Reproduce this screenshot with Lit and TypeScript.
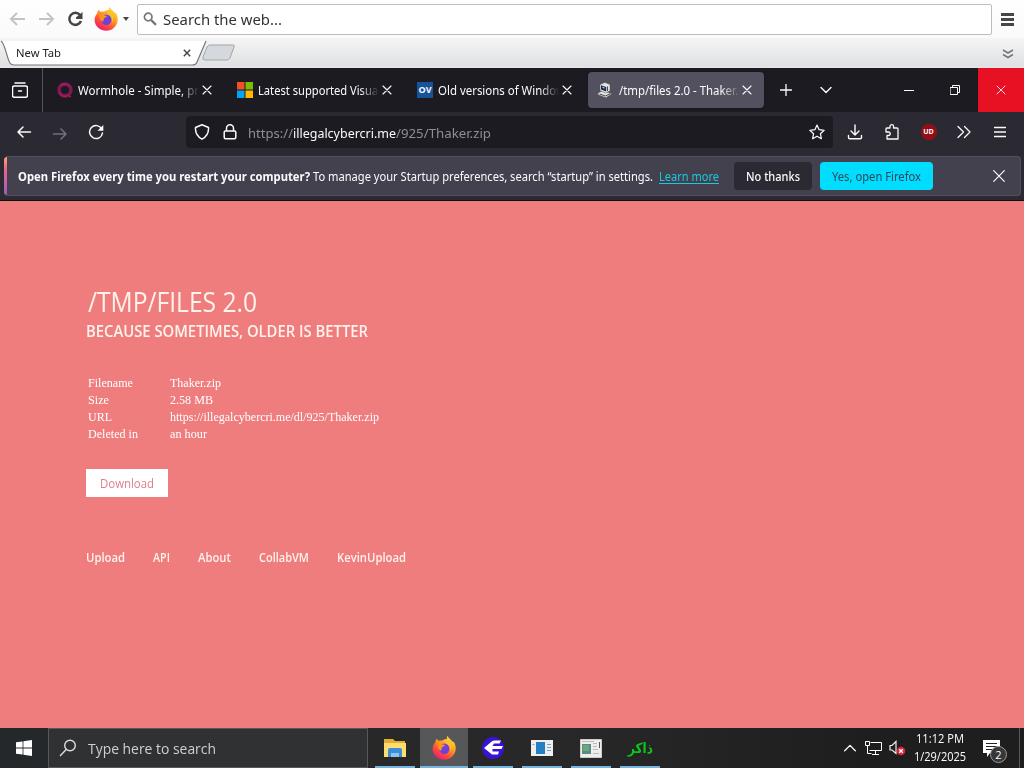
import { LitElement, css, html, svg } from 'lit'
import { customElement, property, query } from 'lit/decorators.js'
import { classMap } from 'lit/directives/class-map.js'

// A line of text squeezed or stretched to a given width
@customElement('fit-text')
export class FitText extends LitElement {
  static styles = css`
    :host { display: inline-block; white-space: pre; flex: none; }
    span { display: inline-block; transform-origin: 0 50%; }
  `

  @property() text = ''
  @property({ type: Number }) width = 0
  @query('span') private label!: HTMLSpanElement

  updated() {
    this.style.width = `${this.width}px`
    this.label.style.transform = 'none'
    const natural = this.label.getBoundingClientRect().width
    if (natural) this.label.style.transform = `scaleX(${this.width / natural})`
  }

  render() {
    return html`<span>${this.text}</span>`
  }
}

const fit = (text: string, width: number) => html`<fit-text text=${text} width=${width}></fit-text>`

const firefoxLogo = (size: number) => html`
  <svg width=${size} height=${size} viewBox="0 0 24 24">
    <defs>
      <linearGradient id="flame" x1="0.85" y1="0.05" x2="0.25" y2="1">
        <stop offset="0" stop-color="#ffe33d"></stop>
        <stop offset="0.4" stop-color="#ff9a1f"></stop>
        <stop offset="0.7" stop-color="#ff4a3b"></stop>
        <stop offset="1" stop-color="#e8187c"></stop>
      </linearGradient>
    </defs>
    <path fill="url(#flame)" d="M3.3 6.2C3.4 4.7 4 3.5 4.8 2.7L6.6 5C8 4.4 9 4.4 10 4.7C11.4 3.5 13.2 2.7 15 3C14.6 1.8 14.9.8 15.3 0C16.5 2 18.6 3.1 20 5C21 6 21.4 6.6 21.5 5.6C24.5 9.4 24.5 15.5 21.2 19.5C17.5 24.5 9.4 25.2 4.5 21C-.2 17-.7 10.5 3.3 6.2Z"></path>
    <circle cx="12.3" cy="12.8" r="5.2" fill="#7041d8"></circle>
    <path fill="#ff9226" d="M5.2 8.2C7.4 6.4 9.6 7.8 10.5 8.5L13 8.8C12.6 10.6 10.8 10.6 10 11.4C9.5 12.6 9.9 13.5 8.8 14.8C6.6 13.6 5.4 11.2 5.2 8.2Z"></path>
    <path fill="#ffc02e" d="M14 3.6C19.4 6.4 20.6 11.6 18 16C18.4 11.4 16.8 8.6 13.5 6.8Z"></path>
  </svg>
`

const wormholeIcon = html`
  <svg width="16" height="16" viewBox="0 0 16 16" fill="none">
    <circle cx="8" cy="8" r="5.9" stroke="#7d1850" stroke-width="3.6"></circle>
    <path d="M3.2 3.8A6.3 6.3 0 0 1 13 5M2 10a6.3 6.3 0 0 0 9 3.5l3 1.5" stroke="#a81c64" stroke-width="1.3"></path>
  </svg>
`

const microsoftIcon = html`
  <svg width="16" height="16" viewBox="0 0 16 16">
    <path fill="#f25022" d="M0 0h7.5v7.5H0z"></path>
    <path fill="#7fba00" d="M8.5 0H16v7.5H8.5z"></path>
    <path fill="#00a4ef" d="M0 8.5h7.5V16H0z"></path>
    <path fill="#ffb900" d="M8.5 8.5H16V16H8.5z"></path>
  </svg>
`

const computerIcon = html`
  <svg width="16" height="16" viewBox="0 0 16 16">
    <path fill="#e4e4e0" stroke="#555" stroke-width=".5" d="M1 11l5-2.5 9 3.2-6 4L1 12.8z"></path>
    <path fill="#e4e4e0" stroke="#555" stroke-width=".5" d="M3 2.5L8 .4l5 2.2v6.2L8.6 11 3 8.6z"></path>
    <path fill="#1c2450" d="M4 3.2l5.2 1.8v4.4L4 7.4z"></path>
    <path fill="#a7bee6" d="M5.5 4.5l2 .8v1.5l-2-.7z"></path>
    <path fill="none" stroke="#44444a" d="M2.5 12l6 2 4.8-2.4M10.5 4.5v4.5"></path>
  </svg>
`

const ovIcon = html`<span class="ov">OV</span>`

const tabs = [
  { icon: wormholeIcon, title: 'Wormhole - Simple, pr', width: 121, active: false },
  { icon: microsoftIcon, title: 'Latest supported Visual', width: 123, active: false },
  { icon: ovIcon, title: 'Old versions of Window', width: 127, active: false },
  { icon: computerIcon, title: '/tmp/files 2.0 - Thaker.', width: 119, active: true },
]

const details = [
  { name: 'Filename', nameWidth: 45, value: 'Thaker.zip', valueWidth: 51 },
  { name: 'Size', nameWidth: 21, value: '2.58 MB', valueWidth: 43 },
  { name: 'URL', nameWidth: 24, value: 'https://illegalcybercri.me/dl/925/Thaker.zip', valueWidth: 209 },
  { name: 'Deleted in', nameWidth: 50, value: 'an hour', valueWidth: 37 },
]

const links: [string, number][] = [
  ['Upload', 39],
  ['API', 17],
  ['About', 33],
  ['CollabVM', 50],
  ['KevinUpload', 69],
]

const lineIcon = (size: number, body: unknown, width = 1.5) => html`
  <svg width=${size} height=${size} viewBox="0 0 ${size} ${size}" fill="none" stroke="currentColor" stroke-width=${width} stroke-linecap="round" stroke-linejoin="round">${body}</svg>
`

const cross = svg`<path d="M1 1l8 8M9 1l-8 8"></path>`

@customElement('search-toolbar')
export class SearchToolbar extends LitElement {
  static styles = css`
    :host { display: block; height: 68px; font-family: "Noto Sans", "Open Sans", sans-serif; color: #222; }
    svg { display: block; flex: none; }
    .bar { height: 38px; display: flex; align-items: center; background: linear-gradient(#fff, #fafafa); box-sizing: border-box; padding-left: 9px; }
    .faded { color: #c4c4c4; }
    .back { margin-right: 12px; }
    .forward { margin-right: 12px; }
    .reload { color: #444; margin-right: 10px; }
    .caret { border: 3.5px solid transparent; border-top: 4px solid #444; border-bottom: 0; margin: 0 8px 0 5px; }
    .field {
      width: 855px; height: 31px; box-sizing: border-box; border: 1px solid #bdbdbd; border-radius: 2px; background: #fff;
      display: flex; align-items: center; padding-left: 5px; gap: 6px; font-size: 15px; line-height: 20px; color: #333;
    }
    .lines { display: grid; gap: 2px; margin-left: 9px; }
    .lines i { width: 13px; height: 3px; background: #4a4444; }
    .strip {
      height: 30px; display: flex; align-items: flex-start;
      background: linear-gradient(#f5f5f5, #dfe1e3 93%, #e6e8ed); box-sizing: border-box;
    }
    .tab { width: 204px; height: 28px; display: grid; margin-top: 2px; }
    .tab > * { grid-area: 1 / 1; }
    .label { display: flex; align-items: center; padding-left: 16px; gap: 122px; font-size: 11.5px; line-height: 16px; margin-bottom: 3px; }
    .new { margin: 6px 0 0 -2px; }
    .more { margin: 11px 10px 0 auto; color: #777; }
  `

  render() {
    return html`
      <div class="bar">
        <svg class="faded back" width="17" height="14" viewBox="0 0 17 14" fill="none" stroke="currentColor" stroke-width="2"><path d="M8 1L2 7l6 6M2 7h14"></path></svg>
        <svg class="faded forward" width="17" height="14" viewBox="0 0 17 14" fill="none" stroke="currentColor" stroke-width="2"><path d="M9 1l6 6-6 6M15 7H1"></path></svg>
        <svg class="reload" width="17" height="17" viewBox="0 0 17 17" fill="none" stroke="currentColor" stroke-width="2.5"><path d="M13 4A6 6 0 1 0 14 10"></path><path fill="currentColor" stroke="none" d="M9 8V6.5L15.5 1v7z"></path></svg>
        ${firefoxLogo(24)}
        <i class="caret"></i>
        <div class="field">
          <svg width="14" height="14" viewBox="0 0 14 14" fill="none" stroke="#777"><circle cx="5.2" cy="5" r="3.8" stroke-width="1.7"></circle><path stroke-width="2.2" d="M8.2 8.1l4.8 4.8"></path></svg>
          ${fit('Search the web...', 119)}
        </div>
        <div class="lines"><i></i><i></i><i></i></div>
      </div>
      <div class="strip">
        <div class="tab">
          <svg width="208" height="28" viewBox="0 0 208 28"><path fill="#fff" stroke="#777" stroke-width="1.2" d="M1 1c4 2 6 18 9 22q1 2 4 2h178q4 0 5-3l9-21"></path></svg>
          <div class="label">
            ${fit('New Tab', 45)}
            <svg width="8" height="8" viewBox="0 0 10 10" stroke="#444" stroke-width="1.8">${cross}</svg>
          </div>
        </div>
        <svg class="new" width="34" height="17" viewBox="0 0 34 17"><path fill="#d5d9dd" stroke="#a1a6a9" d="M8 1h23q2 0 1 2l-4 11q-1 2-3 2H3q-3 0-2-3L5 3q1-2 3-2z"></path></svg>
        <svg class="more" width="12" height="10" viewBox="0 0 12 10" fill="none" stroke="currentColor" stroke-width="1.6"><path d="M1 1l5 3 5-3M1 5.5l5 3 5-3"></path></svg>
      </div>
    `
  }
}

@customElement('firefox-chrome')
export class FirefoxChrome extends LitElement {
  static styles = css`
    :host { display: block; height: 133px; background: #2b2a33; font-family: "Noto Sans", "Open Sans", sans-serif; color: #fbfbfe; font-size: 12px; line-height: 18px; }
    svg { display: block; flex: none; }
    .tabbar { height: 44px; background: #1c1b22; display: flex; align-items: center; }
    .view { width: 43px; height: 44px; box-sizing: border-box; padding-left: 12px; display: flex; align-items: center; border-right: 1px solid #55545e; margin-right: 5px; }
    .tabs { display: flex; gap: 4px; }
    .tab { width: 176px; height: 36px; box-sizing: border-box; padding-left: 9px; border-radius: 4px; display: flex; align-items: center; }
    .tab.active { background: #53515f; box-shadow: 0 0 2px #0006; }
    .title { width: 128px; margin: 2px -4px 0 5px; mask-image: linear-gradient(to right, #000 102px, transparent 121px); }
    .active .title { margin-left: 6px; margin-right: -5px; }
    .ov { width: 16px; height: 16px; background: #17529a; font: bold 9px/15px "Open Sans", sans-serif; text-align: center; flex: none; }
    .plus { margin-left: 16px; }
    .down { margin-left: 28px; }
    .window { margin-left: auto; display: flex; }
    .window div { width: 46px; height: 44px; display: grid; place-items: center; }
    .window .close { background: #e81123; }
    .navbar { height: 44px; display: flex; align-items: center; box-sizing: border-box; padding: 0 16px; }
    .dim { color: #73727b; }
    .navbar .dim { margin: 0 20px; }
    .url { width: 647px; height: 32px; margin-top: -4px; margin-left: 82px; box-sizing: border-box; background: #1c1b22; border-radius: 4px; display: flex; align-items: center; padding: 0 8px; gap: 12px; font-size: 13px; color: #8f8e98; }
    .url span { display: flex; margin-right: auto; margin-left: -2px; padding-top: 2px; }
    .url b { font-weight: 400; color: #fbfbfe; }
    .tools { display: flex; align-items: center; justify-content: space-between; width: 159px; margin: -4px 0 0 14px; }
    .nav-icon { margin-top: -4px; }
    .badge { width: 16px; height: 16px; border-radius: 50%; background: #940e16; font: bold 7px/16px "Open Sans", sans-serif; text-align: center; }
    .notice { height: 40px; margin: 0 3px 0 4px; box-sizing: border-box; background: #42414d; border: 1px solid #52515e; border-left: 0; border-radius: 4px; display: flex; align-items: center; overflow: hidden; }
    .stripe { width: 3px; height: 40px; background: linear-gradient(#ffac68, #ef6686 30%, #9f59bb); margin-right: 11px; }
    .notice b, .notice a, .copy { display: flex; margin-top: 2px; }
    .notice .copy { margin-left: 3px; }
    .notice a { color: #1bc8df; margin: 2px 15px 0 6px; border-bottom: 1px solid #1bc8df; line-height: 13px; }
    .button { height: 28px; box-sizing: border-box; padding-top: 2px; border-radius: 4px; display: grid; place-items: center; background: #2b2a33; font-weight: 500; width: 78px; margin-right: 8px; }
    .primary { width: 113px; background: #00ddff; color: #28495c; font-weight: 400; }
    .dismiss { margin-left: auto; margin-right: 15px; }
    .edge { height: 4px; border-bottom: 1px solid #111; }
  `

  render() {
    return html`
      <div class="tabbar">
        <div class="view">
          ${lineIcon(16, svg`<path d="M3 1h10M2.5 4h11q2 0 2 2v7q0 2.3-2 2.3h-11q-2 0-2-2V6q0-2 2-2zM6.5 9h3"></path>`)}
        </div>
        <div class="tabs">
          ${tabs.map((tab) => html`
            <div class=${classMap({ tab: true, active: tab.active })}>
              ${tab.icon}
              <div class="title">${fit(tab.title, tab.width)}</div>
              ${lineIcon(10, cross, 1.1)}
            </div>
          `)}
        </div>
        <div class="plus">${lineIcon(12, svg`<path d="M6 .5v11M.5 6h11"></path>`, 1.3)}</div>
        <div class="down">${lineIcon(12, svg`<path d="M1 3.5l5 5 5-5"></path>`, 1.4)}</div>
        <div class="window">
          <div>${lineIcon(10, svg`<path d="M0 5.5h10"></path>`, 1)}</div>
          <div>${lineIcon(10, svg`<path d="M.5 2.5h7v7h-7zM2.5 2.5v-2h7v7h-2"></path>`, 1)}</div>
          <div class="close">${lineIcon(10, cross, 0.9)}</div>
        </div>
      </div>
      <div class="navbar">
        <div class="nav-icon">${lineIcon(16, svg`<path d="M7 3L2 8l5 5M2 8h12.5"></path>`)}</div>
        <div class="nav-icon dim">${lineIcon(16, svg`<path d="M9 3l5 5-5 5M14 8H1.5"></path>`)}</div>
        <div class="nav-icon">${lineIcon(16, svg`<path d="M13.8 5A6.5 6.5 0 1 0 14.5 9"></path><path fill="currentColor" stroke="none" d="M9.5 6.8h5.8V1z"></path>`)}</div>
        <div class="url">
          ${lineIcon(16, svg`<path stroke="#fbfbfe" d="M8 .8l6.5 2.7q.5 8-6.5 11.7Q1 11.5 1.5 3.5z"></path>`)}
          ${lineIcon(16, svg`<path stroke="#fbfbfe" d="M3.5 7h9q1.3 0 1.3 1.3v5q0 1.5-1.3 1.5h-9q-1.3 0-1.3-1.5v-5Q2.2 7 3.5 7zM4.5 7V4.3a3.5 3.5 0 0 1 7 0V7"></path>`)}
          <span>${fit('https://', 45)}<b>${fit('illegalcybercri.me', 103)}</b>${fit('/925/Thaker.zip', 95)}</span>
          ${lineIcon(16, svg`<path stroke="#fbfbfe" stroke-width="1.2" d="M8 1l2.1 4.7 5.1.6-3.8 3.4 1 5L8 12.2l-4.4 2.5 1-5L.8 6.3l5.1-.6z"></path>`)}
        </div>
        <div class="tools">
          ${lineIcon(16, svg`<path d="M8 1v9.5M4 7l4 4 4-4M1.5 11.5v2q0 1.3 1.3 1.3h10.4q1.3 0 1.3-1.3v-2"></path>`, 1.4)}
          ${lineIcon(16, svg`<path stroke-width="1.3" d="M3 15V11.5h1.5a1.7 1.7 0 0 0 0-3.5H2V5q0-1 1-1h3V2.5a1.8 1.8 0 0 1 3.6 0V4H13q1 0 1 1v10z"></path>`)}
          <div class="badge">UD</div>
          ${lineIcon(16, svg`<path d="M1 2.5L6.5 8 1 13.5M7.5 2.5L13 8l-5.5 5.5"></path>`, 1.3)}
          ${lineIcon(12, svg`<path d="M.5 1.5h11M.5 6h11M.5 10.5h11"></path>`, 1.3)}
        </div>
      </div>
      <div class="notice">
        <i class="stripe"></i>
        <b>${fit('Open Firefox every time you restart your computer?', 292)}</b>
        <span class="copy">${fit('To manage your Startup preferences, search “startup” in settings.', 340)}</span>
        <a>${fit('Learn more', 60)}</a>
        <div class="button">${fit('No thanks', 54)}</div>
        <div class="button primary">${fit('Yes, open Firefox', 89)}</div>
        <div class="dismiss">${lineIcon(12, svg`<path d="M.7.7l10.6 10.6M11.3.7L.7 11.3"></path>`, 1.2)}</div>
      </div>
      <div class="edge"></div>
    `
  }
}

@customElement('file-page')
export class FilePage extends LitElement {
  static styles = css`
    :host { display: block; height: 527px; box-sizing: border-box; padding: 83px 86px 0; background: #ef7d7e; color: #fff3ec; font-family: "Open Sans", "Noto Sans", sans-serif; }
    h1 { margin: 0 0 1px 2px; font-size: 26.5px; line-height: 36px; font-weight: 380; display: flex; }
    h2 { margin: 0; font-size: 16px; line-height: 20px; font-weight: 540; display: flex; }
    dl { margin: 33px 0 0 2px; display: grid; grid-template-columns: 82px auto; font-family: "Liberation Serif", serif; font-size: 13px; line-height: 17px; color: #fff; }
    dt, dd { margin: 0; display: flex; }
    .download { width: 82px; height: 28px; margin-top: 27px; display: grid; place-items: center; background: #fff; color: #dd7f8b; font-size: 12px; }
    nav { display: flex; gap: 28px; margin-top: 51px; font-size: 12px; line-height: 20px; font-weight: 600; }
  `

  render() {
    return html`
      <h1>${fit('/TMP/FILES 2.0', 169)}</h1>
      <h2>${fit('BECAUSE SOMETIMES, OLDER IS BETTER', 282)}</h2>
      <dl>
        ${details.map((row) => html`
          <dt>${fit(row.name, row.nameWidth)}</dt>
          <dd>${fit(row.value, row.valueWidth)}</dd>
        `)}
      </dl>
      <div class="download">${fit('Download', 54)}</div>
      <nav>${links.map(([text, width]) => fit(text, width))}</nav>
    `
  }
}

const explorerIcon = html`
  <svg width="22" height="20" viewBox="0 0 22 20">
    <path fill="#e2ad32" d="M0 1h9l2 2h10v6H0z"></path>
    <path fill="#ffdc70" d="M0 5h22v14H0z"></path>
    <path fill="#398ed5" d="M4 12q0-2 2-2h10q2 0 2 2v7h-3v-4H7v4H4z"></path>
    <path fill="#8cc6ee" d="M7 15h8v4H7z"></path>
  </svg>
`

const arrowIcon = html`
  <svg width="24" height="24" viewBox="0 0 24 24">
    <circle cx="12" cy="12" r="11" fill="#3a12d6"></circle>
    <path fill="#fff" d="M3 12L11 5.2Q12 4.5 13.5 4.5H20L18.5 7.5H13L11.5 10H22L20.5 13H11.5V15.5H18L17 18.5H11z"></path>
  </svg>
`

const windowIcon = html`
  <svg width="22" height="18" viewBox="0 0 22 18">
    <path fill="#eee" d="M0 1h22v16H0z"></path>
    <path fill="#257fc5" d="M5 3h9v12H5z"></path>
    <path stroke="#7aa3c9" d="M16 5.5h4M16 8.5h4M16 11.5h4M1.5 5.5h2"></path>
  </svg>
`

const panelIcon = html`
  <svg width="22" height="19" viewBox="0 0 22 19">
    <path fill="#eee" stroke="#ccc" d="M.5.5h21v18H.5z"></path>
    <path fill="#598d84" d="M2 5h9v10H2z"></path>
    <path fill="#6ca780" d="M3 6h6v6H3z"></path>
    <path stroke="#bbb" d="M13 4.5h4M13 7.5h4M13 10.5h5M2 2.5h12M13 14.5h6"></path>
    <path stroke="#555" d="M19.5 3v6"></path>
  </svg>
`

const arabicIcon = html`<span class="arabic">${fit('ذاكر', 25)}</span>`

const apps = [
  { icon: explorerIcon, active: false },
  { icon: firefoxLogo(24), active: true },
  { icon: arrowIcon, active: false },
  { icon: windowIcon, active: false },
  { icon: panelIcon, active: false },
  { icon: arabicIcon, active: false },
]

@customElement('task-bar')
export class TaskBar extends LitElement {
  static styles = css`
    :host { display: flex; height: 40px; background: linear-gradient(90deg, #25282b, #292828 55%, #1e1e1e 85%); color: #fff; font-family: "Open Sans", "Noto Sans", sans-serif; }
    svg { display: block; flex: none; }
    .start { width: 48px; display: grid; place-items: center; }
    .search { width: 320px; box-sizing: border-box; border: 1px solid #58595b; background: #303132; display: flex; align-items: center; padding-left: 10px; gap: 11px; font-size: 15px; color: #d0d0d0; }
    .apps { display: flex; gap: 1px; margin-left: 3px; }
    .app { width: 48px; height: 40px; box-sizing: border-box; display: grid; place-items: center; position: relative; }
    .app::after { content: ''; position: absolute; left: 4px; right: 4px; bottom: 0; height: 2px; background: #76b5df; }
    .app.active { background: #555759; }
    .app.active::after { left: 0; right: 0; }
    .arabic { font: bold 14px/20px "DejaVu Sans", sans-serif; color: #08c81b; display: flex; }
    .tray { margin-left: auto; display: flex; align-items: center; }
    .net { margin: 0 7px 0 9px; }
    .clock { width: 56px; display: grid; justify-items: center; margin: 0 15px 0 6px; font-size: 12px; line-height: 18px; }
    .notes { position: relative; margin-right: 19px; }
    .count { position: absolute; left: 7px; top: 6px; width: 15px; height: 15px; border: 1px solid #9a9a9a; border-radius: 50%; background: #373737; font-size: 11px; line-height: 15px; text-align: center; }
    .desktop { width: 4px; height: 40px; border-left: 1px solid #55575a; }
  `

  render() {
    return html`
      <div class="start">
        <svg width="16" height="16" viewBox="0 0 16 16" fill="#fff"><path d="M0 2.3L6.6 1.4v6.2H0zM7.4 1.3L16 0v7.6H7.4zM0 8.4h6.6v6.2L0 13.7zM7.4 8.4H16V16l-8.6-1.3z"></path></svg>
      </div>
      <div class="search">
        <svg width="18" height="18" viewBox="0 0 18 18" fill="none" stroke="#ddd" stroke-width="1.4"><circle cx="11" cy="6.5" r="5.3"></circle><path d="M7.2 10.4L1 17"></path></svg>
        ${fit('Type here to search', 128)}
      </div>
      <div class="apps">
        ${apps.map((app) => html`<div class=${classMap({ app: true, active: app.active })}>${app.icon}</div>`)}
      </div>
      <div class="tray">
        ${lineIcon(12, svg`<path d="M.7 8.7L6 3.4l5.3 5.3"></path>`, 1.3)}
        <svg class="net" width="17" height="16" viewBox="0 0 17 16" fill="none" stroke="#fff"><path d="M5.5 2.5h11v8H4.5M10.5 10.5v4M7 14.5h7M.5 1.5h4v4h-4zM2.5 5.5v8h4"></path></svg>
        <svg width="17" height="16" viewBox="0 0 17 16" fill="none"><path stroke="#eee" stroke-width="1.2" d="M1 5.5h2l4-4v12l-4-3.5H1z"></path><circle cx="12" cy="11" r="4.3" fill="#d92638"></circle><path stroke="#fff" stroke-width="1.3" d="M10.2 9.2l3.6 3.6M13.8 9.2l-3.6 3.6"></path></svg>
        <div class="clock">${fit('11:12 PM', 48)}${fit('1/29/2025', 52)}</div>
        <div class="notes">
          <svg width="17" height="17" viewBox="0 0 17 17"><path fill="#fff" d="M0 0h17v13H7l-3 4v-4H0z"></path><path stroke="#222" stroke-width="1.2" d="M3 3.5h11M3 6.5h11M3 9.5h8"></path></svg>
          <span class="count">2</span>
        </div>
        <i class="desktop"></i>
      </div>
    `
  }
}

@customElement('app-root')
export class AppRoot extends LitElement {
  static styles = css`
    :host { display: block; width: 1024px; height: 768px; overflow: hidden; }
  `

  render() {
    return html`
      <search-toolbar></search-toolbar>
      <firefox-chrome></firefox-chrome>
      <file-page></file-page>
      <task-bar></task-bar>
    `
  }
}
